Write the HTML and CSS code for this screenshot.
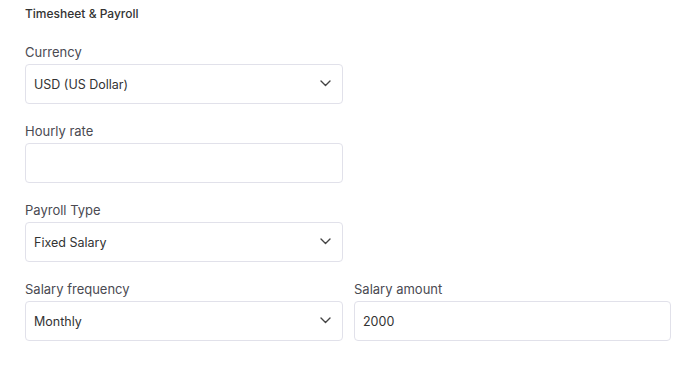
FILE: index.html
```html
<!DOCTYPE html>
<html>
<head>
<meta charset="utf-8">
<link rel="stylesheet" href="styles.css">
</head>
<body>
<div class="panel">
  <div class="title">Timesheet &amp; Payroll</div>
  <div class="grid">
    <div class="field">
      <div class="label">Currency</div>
      <div class="box select"><span>USD (US Dollar)</span><svg class="chev" width="11" height="7" viewBox="0 0 11 7"><path d="M1 1 L5.5 5.5 L10 1" fill="none" stroke="#444" stroke-width="1.4" stroke-linecap="round" stroke-linejoin="round"/></svg></div>
    </div>
    <div></div>
    <div class="field">
      <div class="label">Hourly rate</div>
      <div class="box"></div>
    </div>
    <div></div>
    <div class="field">
      <div class="label">Payroll Type</div>
      <div class="box select"><span>Fixed Salary</span><svg class="chev" width="11" height="7" viewBox="0 0 11 7"><path d="M1 1 L5.5 5.5 L10 1" fill="none" stroke="#444" stroke-width="1.4" stroke-linecap="round" stroke-linejoin="round"/></svg></div>
    </div>
    <div></div>
    <div class="field">
      <div class="label">Salary frequency</div>
      <div class="box select"><span>Monthly</span><svg class="chev" width="11" height="7" viewBox="0 0 11 7"><path d="M1 1 L5.5 5.5 L10 1" fill="none" stroke="#444" stroke-width="1.4" stroke-linecap="round" stroke-linejoin="round"/></svg></div>
    </div>
    <div class="field">
      <div class="label">Salary amount</div>
      <div class="box"><span class="val">2000</span></div>
    </div>
  </div>
</div>
</body>
</html>
```
FILE: styles.css
```css
* { box-sizing: border-box; }
body {
  margin: 0;
  background: #fff;
  font-family: "Inter", "Noto Sans", sans-serif;
  color: #333;
}
.panel {
  padding: 6px 17px 0 25px;
}
.title {
  font-size: 12px;
  font-weight: 500;
  line-height: 16px;
  color: #333;
  height: 37px;
}
.grid {
  display: grid;
  grid-template-columns: 318px 317px;
  column-gap: 11px;
  row-gap: 18px;
}
.label {
  font-size: 13px;
  line-height: 18px;
  color: #4a4a52;
  margin-bottom: 3px;
}
.box {
  height: 40px;
  border: 1px solid #e1e1ea;
  border-radius: 4px;
  display: flex;
  align-items: center;
  justify-content: space-between;
  padding: 0 11px 0 8px;
  font-size: 12.5px;
  color: #333;
}
.chev { display: block; margin-top: -1px; }
```
